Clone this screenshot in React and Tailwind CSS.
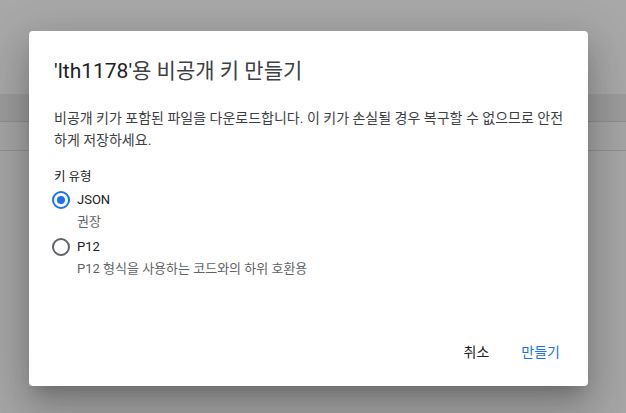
import React from "react";

export default function App() {
  const font = { fontFamily: 'Roboto, "Noto Sans CJK KR", sans-serif' };
  return (
    <div className="relative w-[626px] h-[413px] overflow-hidden bg-[#a6a6a6]" style={font}>
      {/* page behind overlay */}
      <div className="flex flex-col">
        <div className="h-[94px] bg-[#a8a8a8]" />
        <div className="h-[28px] bg-[#9c9c9c] border-b border-[#8e8e8e]" />
        <div className="h-[29px] bg-[#a5a5a5] border-b border-[#919191]" />
      </div>

      {/* dialog */}
      <div className="absolute left-[29px] top-[31px] w-[559px] h-[355px] bg-white rounded-[4px] shadow-[0_11px_15px_-7px_rgba(0,0,0,0.2),0_24px_38px_3px_rgba(0,0,0,0.14),0_9px_46px_8px_rgba(0,0,0,0.12)] flex flex-col">
        <div className="pt-[26px] pl-[25px] pr-[24px]">
          <h1 className="text-[21px] leading-[28px] text-[#3c4043] font-normal">
            <span className="text-[#202124]">'lth1178'</span>용 비공개 키 만들기
          </h1>
          <p className="mt-[22px] text-[14px] leading-[22px] text-[#3c4043] w-[512px]">
            비공개 키가 포함된 파일을 다운로드합니다. 이 키가 손실될 경우 복구할 수 없으므로 안전하게 저장하세요.
          </p>
          <div className="mt-[18px] text-[12.5px] leading-[16px] text-[#202124]">키 유형</div>

          <div className="mt-[5px] flex items-center h-[20px]">
            <div className="ml-[-2px] w-[18px] h-[18px] rounded-full border-2 border-[#1a73e8] flex items-center justify-center">
              <div className="w-[8px] h-[8px] rounded-full bg-[#1a73e8]" />
            </div>
            <span className="ml-[7px] text-[13px] text-[#202124]">JSON</span>
          </div>
          <div className="mt-[3px] ml-[23px] text-[13px] leading-[18px] text-[#5f6368]">권장</div>

          <div className="mt-[6px] flex items-center h-[20px]">
            <div className="ml-[-2px] w-[18px] h-[18px] rounded-full border-2 border-[#5f6368]" />
            <span className="ml-[7px] text-[13px] text-[#202124]">P12</span>
          </div>
          <div className="mt-[3px] ml-[23px] text-[13px] leading-[18px] text-[#5f6368]">
            P12 형식을 사용하는 코드와의 하위 호환용
          </div>
        </div>

        <div className="mt-auto mb-[16px] pr-[20px] flex justify-end gap-[16px]">
          <button className="h-[36px] px-[8px] text-[14px] text-[#202124] rounded">취소</button>
          <button className="h-[36px] px-[8px] text-[14px] text-[#1a73e8] rounded">만들기</button>
        </div>
      </div>
    </div>
  );
}
